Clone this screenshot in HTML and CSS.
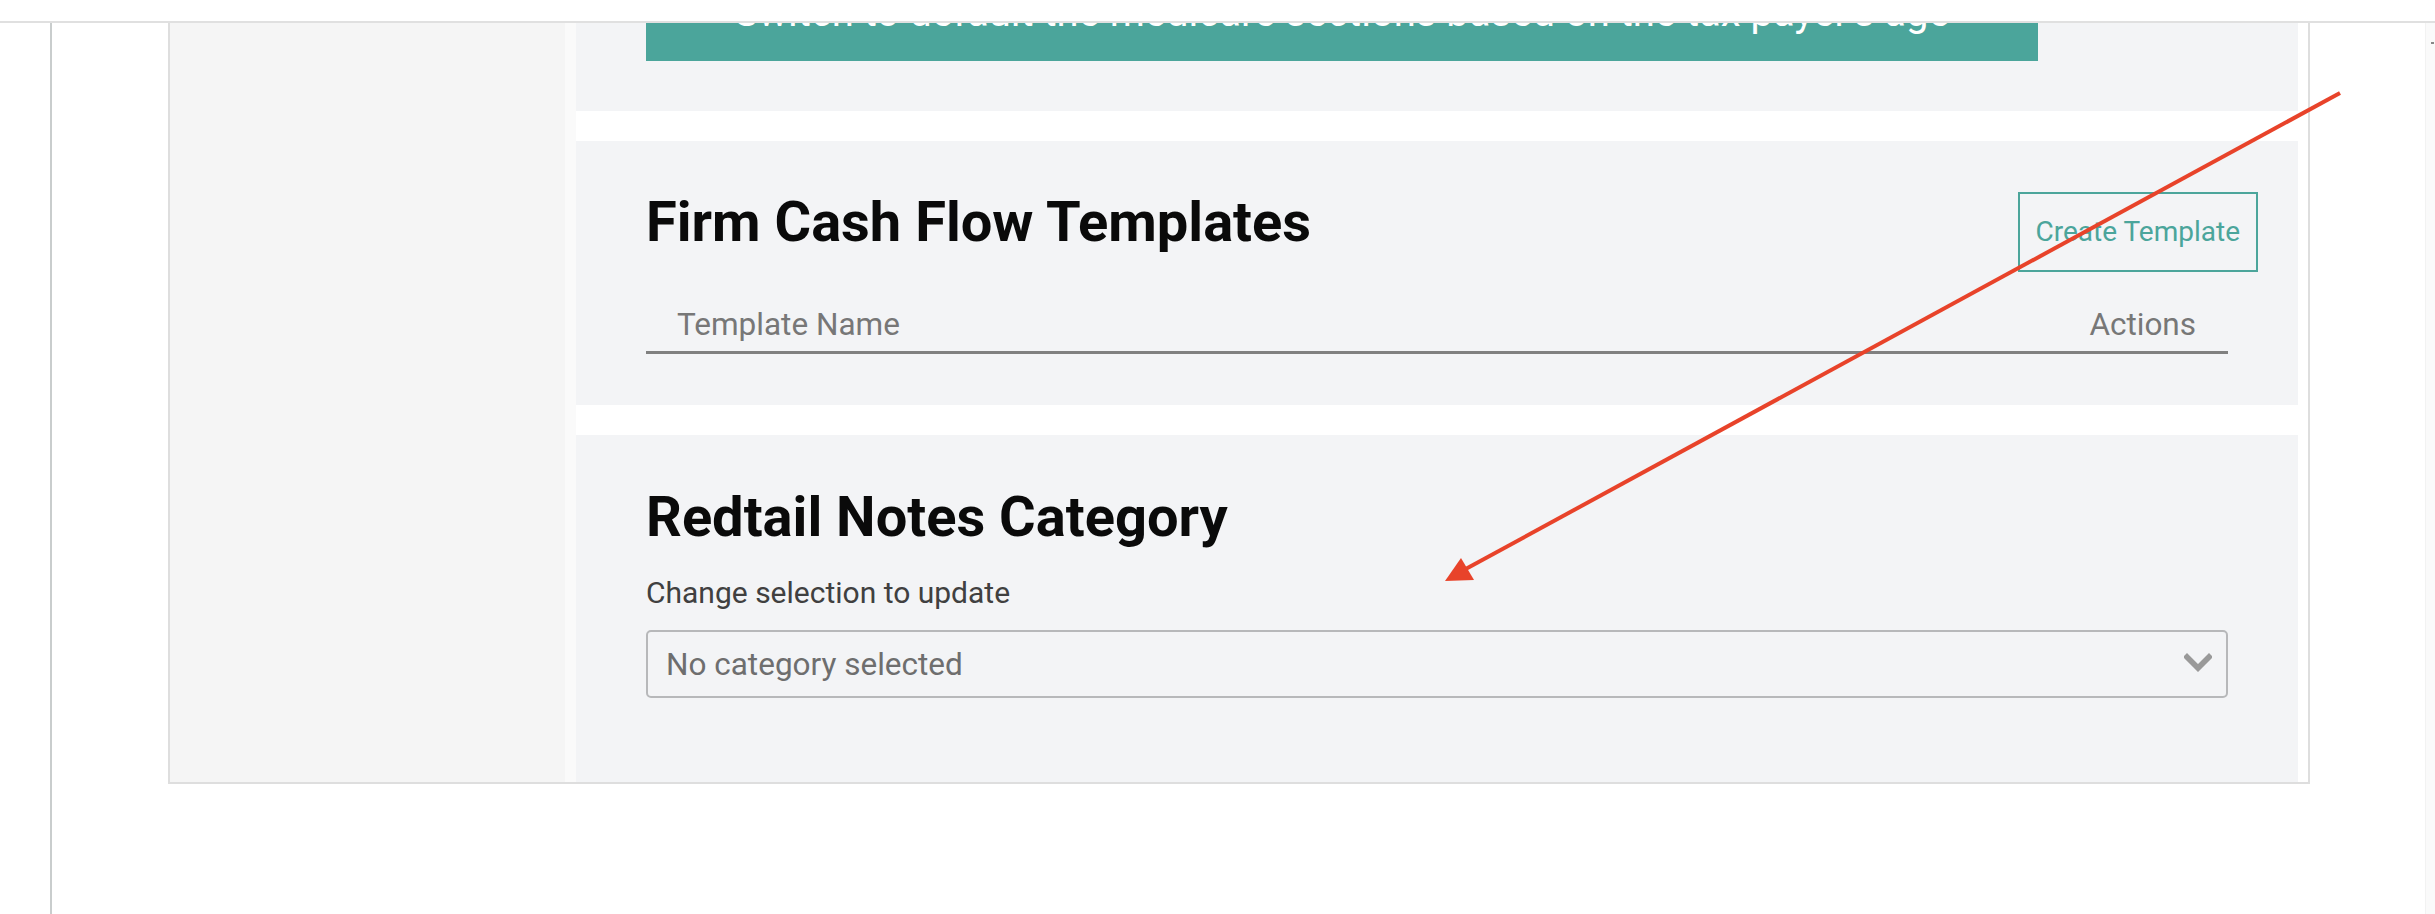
FILE: index.html
```html
<!DOCTYPE html>
<html lang="en">
<head>
<meta charset="utf-8">
<title>Firm Settings</title>
<link rel="stylesheet" href="styles.css">
</head>
<body>
<div class="topbar"></div>
<div class="page">
  <div class="rail"></div>
  <div class="main">
    <div class="box">
      <aside class="sidebar"></aside>
      <div class="content">
        <section class="card card-medicare">
          <div class="teal-btn">Switch to default the medicare sections based on the tax payer's age</div>
        </section>
        <section class="card card-templates">
          <div class="card-head">
            <h2 class="card-title">Firm Cash Flow Templates</h2>
            <button class="outline-btn" type="button">Create Template</button>
          </div>
          <table class="tpl-table">
            <thead>
              <tr><th class="th-name">Template Name</th><th class="th-actions">Actions</th></tr>
            </thead>
          </table>
        </section>
        <section class="card card-redtail">
          <h2 class="card-title">Redtail Notes Category</h2>
          <div class="field-label">Change selection to update</div>
          <div class="select">
            <span class="select-value">No category selected</span>
            <svg class="chevron" width="28" height="22" viewBox="0 0 28 22"><polyline points="3,5 14,16 25,5" fill="none" stroke="#999" stroke-width="5.5" stroke-linecap="square" stroke-linejoin="miter"/></svg>
          </div>
        </section>
      </div>
    </div>
  </div>
  <div class="spacer"></div>
  <div class="scrolltrack"><span class="scroll-mark"></span></div>
</div>
<svg class="annotation" width="2435" height="914" viewBox="0 0 2435 914">
  <line x1="2340" y1="93" x2="1462" y2="571" stroke="#e8432a" stroke-width="4"/>
  <polygon points="1445,581 1461,558 1474,580" fill="#e8432a"/>
</svg>
</body>
</html>
```
FILE: styles.css
```css
html, body {
  margin: 0;
  padding: 0;
  background: #ffffff;
}
body {
  font-family: Roboto, "Liberation Sans", sans-serif;
  width: 2435px;
  height: 914px;
  overflow: hidden;
  position: relative;
}
.topbar {
  height: 21px;
  border-bottom: 2px solid #e0e0e0;
  background: #ffffff;
}
.page {
  display: flex;
  height: 891px;
  overflow: hidden;
}
.rail {
  flex: none;
  width: 50px;
  border-right: 2px solid #c9cdcd;
}
.main {
  flex: none;
  margin-left: 116px;
  width: 2142px;
}
.box {
  display: flex;
  margin-top: -93px;
  border: 2px solid #dedede;
  border-top: none;
}
.sidebar {
  flex: none;
  width: 395px;
  background: #f5f5f5;
}
.content {
  flex: none;
  width: 1722px;
  border-left: 11px solid #fafafa;
  padding-right: 10px;
  background: #ffffff;
}
.card {
  background: #f3f4f6;
  padding: 0 70px;
}
.card-medicare {
  padding-top: 40px;
  padding-bottom: 50px;
  margin-bottom: 30px;
}
.teal-btn {
  width: 1392px;
  background: #4ba59b;
  color: #ffffff;
  font-size: 40px;
  line-height: 47.25px;
  padding: 19px 0 25px;
  text-align: center;
  white-space: nowrap;
}
.card-templates {
  padding-top: 48px;
  padding-bottom: 51px;
  margin-bottom: 30px;
}
.card-head {
  display: flex;
  justify-content: space-between;
  align-items: flex-start;
}
.card-title {
  margin: 0;
  font-size: 56px;
  line-height: 67.2px;
  font-weight: 700;
  color: #0a0a0a;
}
.outline-btn {
  margin-top: 3px;
  margin-right: -30px;
  font-family: Roboto, "Liberation Sans", sans-serif;
  font-size: 28px;
  line-height: 42px;
  padding: 17px 16px;
  border: 2px solid #4ba59b;
  background: transparent;
  color: #4ba59b;
  border-radius: 0;
}
.tpl-table {
  width: 100%;
  margin-top: 29px;
  border-collapse: collapse;
}
.tpl-table th {
  font-size: 31.5px;
  line-height: 47.25px;
  font-weight: 400;
  color: #777777;
  padding: 0 0 2.5px 0;
  border-bottom: 3px solid #808080;
}
.th-name {
  text-align: left;
  padding-left: 31px !important;
}
.th-actions {
  text-align: right;
  padding-right: 32px !important;
}
.card-redtail {
  padding-top: 49px;
  padding-bottom: 84px;
}
.field-label {
  margin-top: 19.5px;
  font-size: 30px;
  line-height: 44.25px;
  font-weight: 400;
  color: #404040;
}
.select {
  margin-top: 15px;
  display: flex;
  align-items: center;
  justify-content: space-between;
  height: 68px;
  box-sizing: border-box;
  border: 2px solid #b7b8ba;
  border-radius: 5px;
  padding: 0 14px 0 18px;
}
.select-value {
  font-size: 31.5px;
  line-height: 47.25px;
  color: #6e6e6e;
  padding-top: 2px;
}
.chevron {
  display: block;
  margin-top: -2px;
}
.spacer {
  flex: 1;
}
.scrolltrack {
  flex: none;
  width: 9px;
  background: #fafafa;
  border-left: 1px solid #f2f2f2;
  position: relative;
}
.scroll-mark {
  position: absolute;
  left: 5px;
  top: 19px;
  width: 3px;
  height: 2px;
  background: #888888;
}
.annotation {
  position: absolute;
  left: 0;
  top: 0;
  pointer-events: none;
}
```
